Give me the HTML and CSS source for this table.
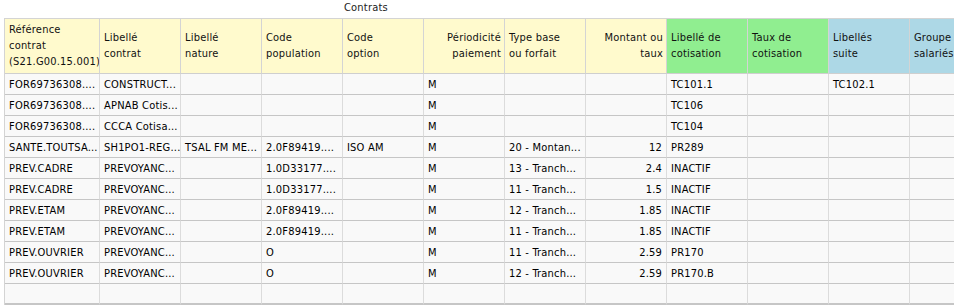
FILE: index.html
```html
<!DOCTYPE html>
<html lang="fr">
<head>
<meta charset="utf-8">
<title>Contrats</title>
<link rel="stylesheet" href="styles.css">
</head>
<body>
<div class="title">Contrats</div>
<div class="grid">
  <div class="h y">Référence<br>contrat<br>(S21.G00.15.001)</div>
  <div class="h y">Libellé<br>contrat</div>
  <div class="h y">Libellé<br>nature</div>
  <div class="h y">Code<br>population</div>
  <div class="h y">Code<br>option</div>
  <div class="h y r">Périodicité<br>paiement</div>
  <div class="h y">Type base<br>ou forfait</div>
  <div class="h y r">Montant ou<br>taux</div>
  <div class="h g">Libellé de<br>cotisation</div>
  <div class="h g">Taux de<br>cotisation</div>
  <div class="h b">Libellés<br>suite</div>
  <div class="h b">Groupe<br>salariés</div>

  <div class="c">FOR69736308....</div><div class="c">CONSTRUCT...</div><div class="c"></div><div class="c"></div><div class="c"></div><div class="c">M</div><div class="c"></div><div class="c r"></div><div class="c">TC101.1</div><div class="c"></div><div class="c">TC102.1</div><div class="c"></div>

  <div class="c">FOR69736308....</div><div class="c">APNAB Cotis...</div><div class="c"></div><div class="c"></div><div class="c"></div><div class="c">M</div><div class="c"></div><div class="c r"></div><div class="c">TC106</div><div class="c"></div><div class="c"></div><div class="c"></div>

  <div class="c">FOR69736308....</div><div class="c">CCCA Cotisa...</div><div class="c"></div><div class="c"></div><div class="c"></div><div class="c">M</div><div class="c"></div><div class="c r"></div><div class="c">TC104</div><div class="c"></div><div class="c"></div><div class="c"></div>

  <div class="c">SANTE.TOUTSA...</div><div class="c">SH1PO1-REG...</div><div class="c">TSAL FM ME...</div><div class="c">2.0F89419....</div><div class="c">ISO AM</div><div class="c">M</div><div class="c">20 - Montan...</div><div class="c r">12</div><div class="c">PR289</div><div class="c"></div><div class="c"></div><div class="c"></div>

  <div class="c">PREV.CADRE</div><div class="c">PREVOYANC...</div><div class="c"></div><div class="c">1.0D33177....</div><div class="c"></div><div class="c">M</div><div class="c">13 - Tranch...</div><div class="c r">2.4</div><div class="c">INACTIF</div><div class="c"></div><div class="c"></div><div class="c"></div>

  <div class="c">PREV.CADRE</div><div class="c">PREVOYANC...</div><div class="c"></div><div class="c">1.0D33177....</div><div class="c"></div><div class="c">M</div><div class="c">11 - Tranch...</div><div class="c r">1.5</div><div class="c">INACTIF</div><div class="c"></div><div class="c"></div><div class="c"></div>

  <div class="c">PREV.ETAM</div><div class="c">PREVOYANC...</div><div class="c"></div><div class="c">2.0F89419....</div><div class="c"></div><div class="c">M</div><div class="c">12 - Tranch...</div><div class="c r">1.85</div><div class="c">INACTIF</div><div class="c"></div><div class="c"></div><div class="c"></div>

  <div class="c">PREV.ETAM</div><div class="c">PREVOYANC...</div><div class="c"></div><div class="c">2.0F89419....</div><div class="c"></div><div class="c">M</div><div class="c">11 - Tranch...</div><div class="c r">1.85</div><div class="c">INACTIF</div><div class="c"></div><div class="c"></div><div class="c"></div>

  <div class="c">PREV.OUVRIER</div><div class="c">PREVOYANC...</div><div class="c"></div><div class="c">O</div><div class="c"></div><div class="c">M</div><div class="c">11 - Tranch...</div><div class="c r">2.59</div><div class="c">PR170</div><div class="c"></div><div class="c"></div><div class="c"></div>

  <div class="c">PREV.OUVRIER</div><div class="c">PREVOYANC...</div><div class="c"></div><div class="c">O</div><div class="c"></div><div class="c">M</div><div class="c">12 - Tranch...</div><div class="c r">2.59</div><div class="c">PR170.B</div><div class="c"></div><div class="c"></div><div class="c"></div>

  <div class="c e"></div><div class="c e"></div><div class="c e"></div><div class="c e"></div><div class="c e"></div><div class="c e"></div><div class="c e"></div><div class="c e"></div><div class="c e"></div><div class="c e"></div><div class="c e"></div><div class="c e"></div>
</div>
</body>
</html>
```

FILE: styles.css
```css
html, body {
  margin: 0;
  padding: 0;
  background: #ffffff;
  overflow: hidden;
}
body {
  width: 954px;
  height: 306px;
  font-family: "DejaVu Sans Condensed", "DejaVu Sans", sans-serif;
  font-size: 11px;
  letter-spacing: 0.2px;
  color: #111;
}
.title {
  height: 18px;
  line-height: 16px;
  padding-left: 344px;
  color: #222;
}
.grid {
  display: grid;
  grid-template-columns: 95px repeat(11, 81px);
  grid-auto-rows: 21px;
  grid-template-rows: 55px;
  margin-left: 4px;
  width: max-content;
  border-left: 1px solid #d4d4d4;
  border-top: 1px solid #d4d4d4;
}
.h {
  box-sizing: border-box;
  display: flex;
  flex-direction: column;
  justify-content: center;
  padding: 0 3px 0 4px;
  line-height: 16px;
  border-right: 1px solid #d4d4d4;
  border-bottom: 1px solid #cfcfcf;
  white-space: nowrap;
  overflow: hidden;
  color: #111;
}
.h.r {
  align-items: flex-end;
  text-align: right;
}
.y { background: #fffacd; }
.g { background: #90ee90; }
.b { background: #add8e6; }
.c {
  box-sizing: border-box;
  display: flex;
  align-items: center;
  padding: 0 3px 0 4px;
  background: #f9f9f9;
  border-right: 1px solid #dcdcdc;
  border-bottom: 1px solid #c6c6c6;
  white-space: nowrap;
  overflow: hidden;
  color: #000;
}
.c.r {
  justify-content: flex-end;
  padding-right: 4px;
}
.c.e {
  border-bottom: 2px solid #c6c6c6;
}
```
